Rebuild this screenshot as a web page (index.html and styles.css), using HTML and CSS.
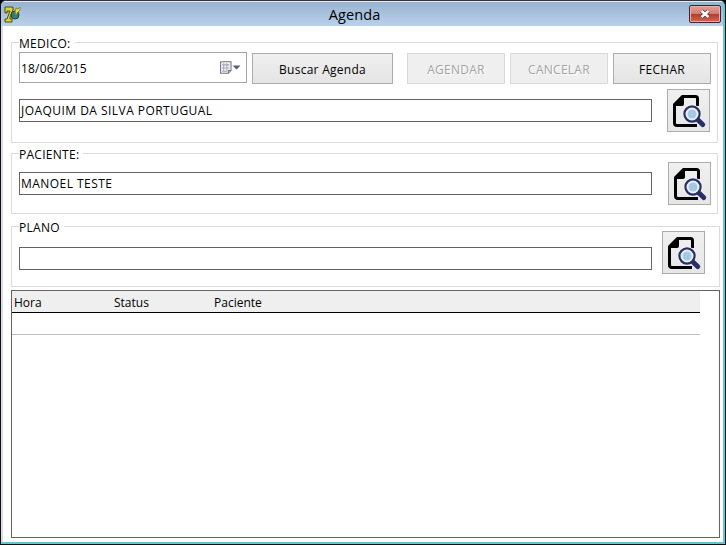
FILE: index.html
```html
<!DOCTYPE html>
<html lang="pt-BR">
<head>
<meta charset="utf-8">
<title>Agenda</title>
<link rel="stylesheet" href="styles.css">
</head>
<body>
<svg class="defs" aria-hidden="true">
  <symbol id="search-doc" viewBox="0 0 43 43">
    <path d="M30.500 17V9.500Q30.500 7.500 28.500 7.500H16L7.500 16V34Q7.500 36.500 10 36.500H30" fill="none" stroke="#000" stroke-width="3"/>
    <path d="M6 17V15L15 6H17V15Q17 17 15 17Z" fill="#000"/>
    <path d="M29 28L36 35" stroke="#f0f0f0" stroke-width="6"/>
    <circle cx="25" cy="25" r="9.500" fill="#f2f5f9"/>
    <path d="M31 31L35.700 35.500" stroke="#292e65" stroke-width="5" stroke-linecap="round"/>
    <circle cx="25" cy="25" r="7.600" fill="#e9f1f8" stroke="#292e65" stroke-width="2.200"/>
    <circle cx="25" cy="25" r="4.500" fill="#a5c9e5"/>
  </symbol>
</svg>
<div class="window">
  <header class="titlebar">
    <svg class="app-icon" viewBox="0 0 18 18">
      <path d="M1 2H9V5L6 12V14H8V17H1V14H3L6 6H3V8H1Z" fill="#ddd529" stroke="#4a4a13"/>
      <circle cx="11" cy="10" r="4" fill="#34805a" stroke="#243e43"/>
      <path d="M10 8L12 9L11 12" fill="none" stroke="#397fb2" stroke-width="1.500"/>
      <path d="M11 7L12 3L14 4L16 2V5L14 7L12 10Z" fill="#e3e437" stroke="#686b20" stroke-width=".7"/>
    </svg>
    <h1 class="title">Agenda</h1>
    <button class="close" aria-label="Fechar janela">
      <svg viewBox="0 0 12 10"><path d="M2.500 2L9.500 8M9.500 2L2.500 8" stroke="#563b45" stroke-width="4"/><path d="M2.500 2L9.500 8M9.500 2L2.500 8" stroke="#fff" stroke-width="2.400"/></svg>
    </button>
  </header>
  <main class="content">
    <section class="group medico">
      <h2 class="legend">MEDICO:</h2>
      <div class="toolbar">
        <div class="date"><span class="date-text">18/06/2015</span>
          <svg class="calendar" viewBox="0 0 21 14">
            <path d="M1.500 1.500H11.500V10L9 12.500H1.500Z" fill="#f1f3f5" stroke="#737780"/>
            <path d="M3 4.500H10M3 7.500H10M3 10.500H8M4.500 3V11M7.500 3V11" stroke="#a4abb5"/>
            <path d="M9 12.500V10H11.500" fill="#c9cdd2" stroke="#737780"/>
            <path d="M13 5H20.500L16.750 9Z" fill="#4a6080"/>
          </svg>
        </div>
        <button class="btn wide">Buscar Agenda</button>
        <button class="btn first-action" disabled>AGENDAR</button>
        <button class="btn" disabled>CANCELAR</button>
        <button class="btn">FECHAR</button>
      </div>
      <div class="lookup">
        <div class="field name">JOAQUIM DA SILVA PORTUGUAL</div>
        <button class="find" aria-label="Buscar medico"><svg><use href="#search-doc"/></svg></button>
      </div>
    </section>
    <section class="group paciente">
      <h2 class="legend">PACIENTE:</h2>
      <div class="lookup">
        <div class="field">MANOEL TESTE</div>
        <button class="find" aria-label="Buscar paciente"><svg><use href="#search-doc"/></svg></button>
      </div>
    </section>
    <section class="group plano">
      <h2 class="legend">PLANO</h2>
      <div class="lookup">
        <div class="field"></div>
        <button class="find" aria-label="Buscar plano"><svg><use href="#search-doc"/></svg></button>
      </div>
    </section>
    <section class="grid">
      <div class="row head"><span>Hora</span><span>Status</span><span>Paciente</span></div>
      <div class="row"></div>
    </section>
  </main>
</div>
</body>
</html>
```
FILE: styles.css
```css
* { box-sizing: border-box; }
body {
  margin: 0;
  background: #000;
  color: #000;
  font: 12px/16px "Open Sans", "Noto Sans", sans-serif;
  overflow: hidden;
}
h1, h2 { margin: 0; font-size: inherit; font-weight: 400; }
button { font: inherit; color: inherit; padding: 0; }
.defs { display: none; }
.window {
  width: 726px;
  height: 545px;
  border: 1px solid #101014;
  border-top-color: #34343e;
  border-radius: 6px 6px 0 0;
  background: #fff;
  box-shadow: inset -2px -2px 0 #65c5d8, inset 2px 0 0 #dcdce9;
  overflow: hidden;
}
.titlebar {
  height: 25px;
  display: flex;
  align-items: center;
  padding: 0 3px;
  margin-right: 2px;
  border-top: 1px solid #e4edf7;
  background: linear-gradient(#97b3d1, #bad1ea);
}
.app-icon { width: 18px; height: 18px; }
.title {
  flex: 1;
  padding: 2px 2px 0 0;
  text-align: center;
  font-size: 14.5px;
  line-height: 20px;
  letter-spacing: .1px;
}
.close {
  width: 32px;
  height: 18px;
  display: grid;
  place-items: center;
  margin-right: -1px;
  border: 1px solid #41232e;
  border-radius: 2px;
  background: linear-gradient(#e2a195, #d27c70 48%, #b73a28 50%, #cf6754);
  box-shadow: inset 0 0 0 1px #e8afa4;
}
.close svg { width: 12px; height: 10px; }
.content { padding: 16px 0 0 10px; }
.group {
  width: 707px;
  border: 1px solid #dcdcdc;
  padding-left: 7px;
}
.legend {
  width: max-content;
  height: 16px;
  margin-top: -8px;
  padding-right: 4px;
  background: #fff;
  line-height: 18px;
  letter-spacing: .28px;
}
.medico { height: 101px; }
.paciente { height: 61px; margin-top: 10px; }
.plano { width: 709px; height: 61px; margin-top: 12px; }
.toolbar { display: flex; gap: 5px; margin-top: 1px; }
.date {
  width: 228px;
  height: 31px;
  display: flex;
  align-items: center;
  justify-content: space-between;
  border: 1px solid #a5a5aa;
  padding: 0 5px 0 1px;
}
.date-text { padding-top: 3px; letter-spacing: .2px; }
.calendar { width: 22px; height: 15px; }
.btn {
  width: 98px;
  height: 31px;
  margin-top: 1px;
  padding-top: 2px;
  border: 1px solid #acacac;
  background: linear-gradient(#f0f0f0, #e4e4e4);
  letter-spacing: .27px;
}
.btn.wide { width: 141px; }
.btn.first-action { margin-left: 9px; }
.btn:disabled {
  border-color: #d9d9d9;
  background: #efefef;
  color: #a3a3a3;
  text-shadow: 1px 1px #fff;
}
.lookup { display: flex; align-items: flex-start; }
.field {
  width: 633px;
  height: 23px;
  border: 1px solid #646464;
  padding: 3px 1px 0;
  white-space: nowrap;
  letter-spacing: .46px;
}
.find {
  width: 43px;
  height: 43px;
  border: 1px solid #acacac;
  background: linear-gradient(#f0f0f0, #e6e6e6);
}
.find svg { display: block; width: 43px; height: 43px; margin: -1px; }
.medico .lookup { margin-top: 5px; }
.medico .field { margin-top: 10px; }
.medico .find { margin-left: 15px; }
.paciente .field { margin-top: 10px; }
.paciente .find { margin-left: 16px; }
.plano .lookup { margin-top: -4px; }
.plano .field { margin-top: 16px; }
.plano .find { margin-left: 10px; }
.grid {
  width: 709px;
  height: 248px;
  margin-top: 3px;
  border: 1px solid #646464;
}
.row { width: 688px; height: 22px; border-bottom: 1px solid #bdbdbd; }
.head {
  display: grid;
  grid-template-columns: 100px 100px 1fr;
  padding: 4px 2px 0;
  background: #efefef;
  border-bottom-color: #000;
}
```
